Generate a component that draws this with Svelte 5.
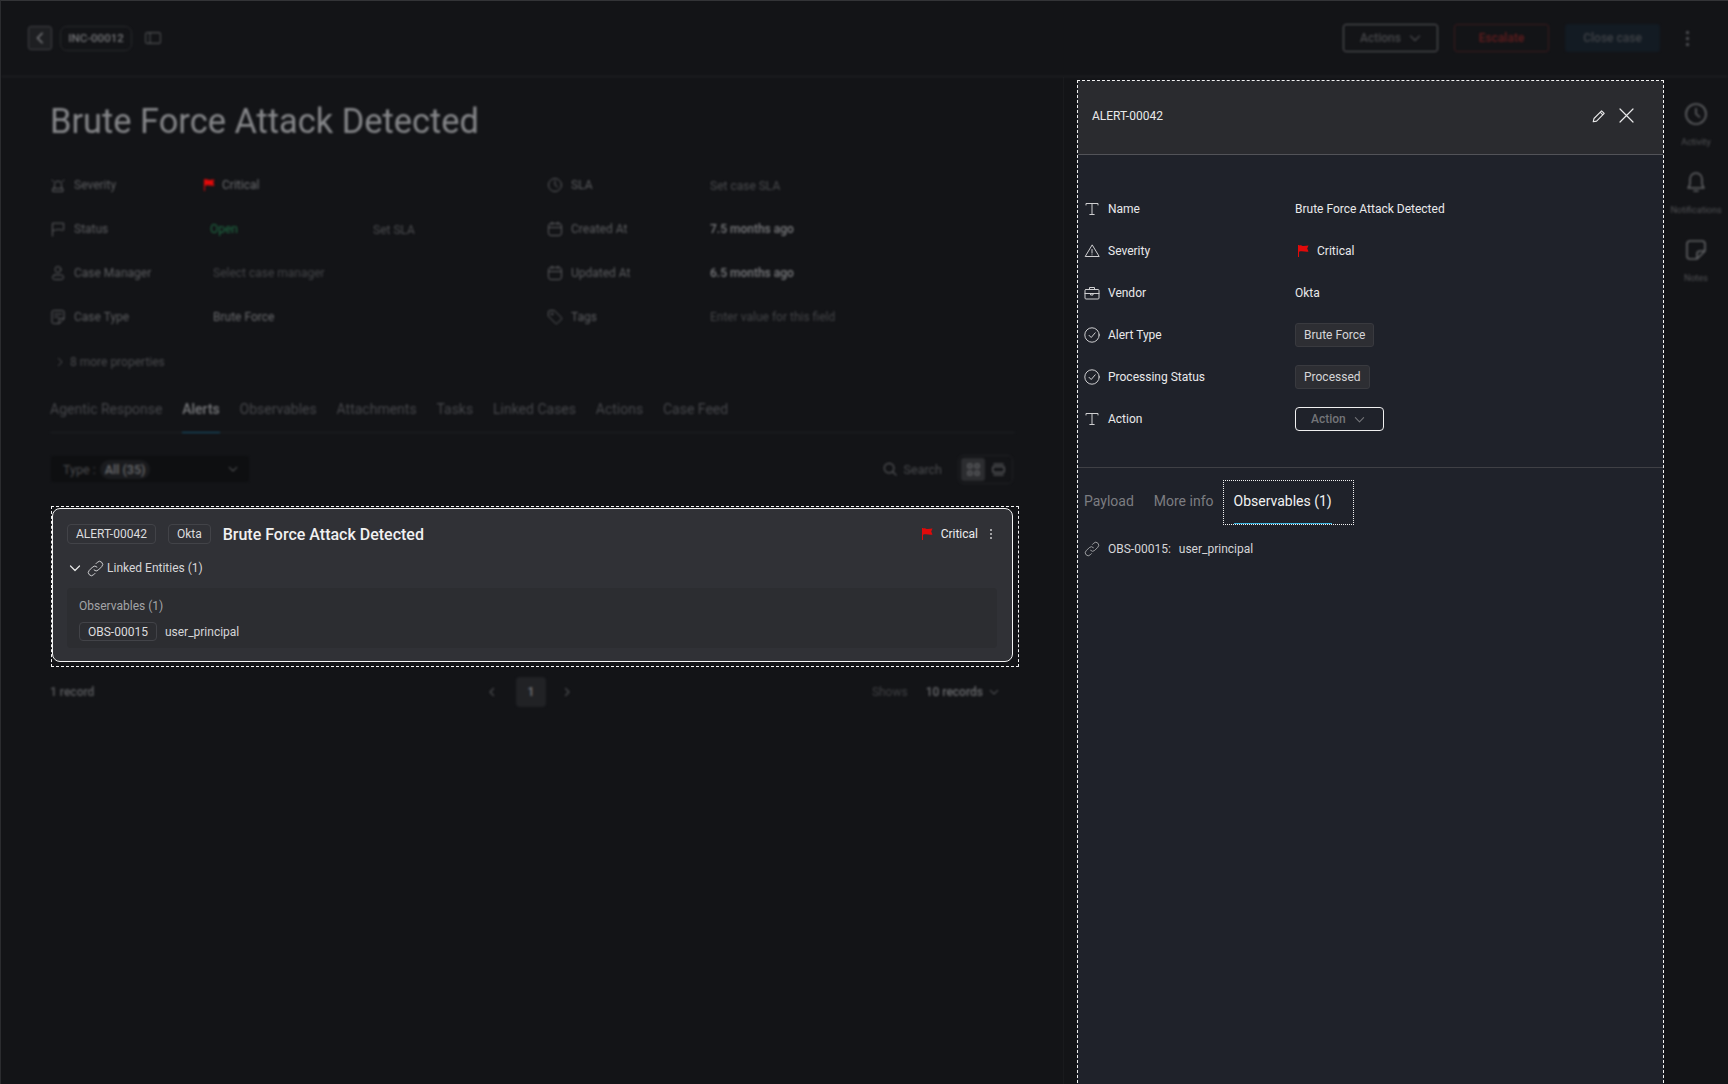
<script lang="ts">
  const leftProps = [
    { icon: 'siren', label: 'Severity' },
    { icon: 'flag', label: 'Status' },
    { icon: 'user', label: 'Case Manager' },
    { icon: 'note', label: 'Case Type' }
  ];
  const rightProps = [
    { icon: 'clock', label: 'SLA', value: 'Set case SLA', cls: 'faint nudge' },
    { icon: 'cal', label: 'Created At', value: '7.5 months ago', cls: 'strong' },
    { icon: 'cal', label: 'Updated At', value: '6.5 months ago', cls: 'strong' },
    { icon: 'tag', label: 'Tags', value: 'Enter value for this field', cls: 'fainter' }
  ];
  const tabs = ['Agentic Response', 'Alerts', 'Observables', 'Attachments', 'Tasks', 'Linked Cases', 'Actions', 'Case Feed'];
</script>

{#snippet glyph(name)}
  <svg class="ico" viewBox="0 0 16 16" fill="none" stroke="currentColor" stroke-width="1" stroke-linecap="round" stroke-linejoin="round">
    {#if name === 'siren'}
      <path d="M4.5 11V7.5a3.5 3.5 0 0 1 7 0V11M3 11.5h10v3H3zM2 3l1.5 1.5M14 3l-1.5 1.5" />
    {:else if name === 'flag'}
      <path d="M2.5 15V2.2h11.2v6.6c-2 1.2-3-.6-5.2-.4-2.2.2-3.8 1.2-6 1" />
    {:else if name === 'user'}
      <circle cx="8" cy="4.5" r="3" /><rect x="2.5" y="10" width="11" height="4.5" rx="2.2" />
    {:else if name === 'note'}
      <path d="M14 9.5V3a1.5 1.5 0 0 0-1.5-1.5h-9A1.5 1.5 0 0 0 2 3v10a1.5 1.5 0 0 0 1.5 1.5H9zM9 14.5v-5h5M4.5 5h7M4.5 8h4" />
    {:else if name === 'clock'}
      <circle cx="8" cy="8" r="6.5" /><path d="M8 4v4l2.5 2" />
    {:else if name === 'cal'}
      <rect x="1.5" y="2.5" width="13" height="12" rx="2.5" /><path d="M1.5 6.5h13M5 1v2.5M11 1v2.5" />
    {:else if name === 'tag'}
      <path d="M1.5 2.5a1 1 0 0 1 1-1h4.8l7.2 7.2a1 1 0 0 1 0 1.4l-4.4 4.4a1 1 0 0 1-1.4 0L1.5 7.3z" /><circle cx="5" cy="5" r=".8" />
    {:else if name === 'text'}
      <path d="M2 4V2.5h12V4M8 2.5v11M5.8 13.5h4.4" />
    {:else if name === 'warn'}
      <path d="M8 2.2 1.2 13.5h13.6zM8 6.5v3.6M8 11.8v.1" />
    {:else if name === 'case'}
      <rect x="1" y="4.5" width="14" height="9.5" rx="1" /><path d="M5.5 4.5V2.5h5v2M1 8.5h14M7 8.5h2v1.5H7z" />
    {:else if name === 'check'}
      <circle cx="8" cy="8" r="7.2" /><path d="m5 8.3 2.2 2.2L11.2 5.8" />
    {:else if name === 'link'}
      <path stroke-width=".9" d="M6.6 9.4a2.9 2.9 0 0 0 4.1 0l3.2-3.2a2.9 2.9 0 0 0-4.1-4.1L8.5 3.4M9.4 6.6a2.9 2.9 0 0 0-4.1 0l-3.2 3.2a2.9 2.9 0 0 0 4.1 4.1l1.3-1.3" />
    {/if}
  </svg>
{/snippet}

{#snippet redFlag()}
  <svg class="red-flag" viewBox="0 0 12 12"><path d="M1 0h1v12H1z" fill="#e10a0a" /><path d="M2 .6c2-.8 3 .5 4.6.5L11.5.6 10.2 3.5l1.3 3c-3 .8-5.6-.9-9.5.2z" fill="#e10a0a" /></svg>
{/snippet}

{#snippet chev(cls)}
  <svg class={cls} viewBox="0 0 12 12" fill="none" stroke="currentColor" stroke-width="1.2" stroke-linecap="round" stroke-linejoin="round"><path d="M1.5 4 6 8.5 10.5 4" /></svg>
{/snippet}

<div class="screen">
  <header class="topbar soft">
    <div class="top-left">
      <button class="back">
        <svg viewBox="0 0 12 16" fill="none" stroke="currentColor" stroke-width="1.6" stroke-linecap="round" stroke-linejoin="round"><path d="M8.5 2.5 3 8l5.5 5.5" /></svg>
      </button>
      <span class="case-id">INC-00012</span>
      <svg class="sidebar-ico" viewBox="0 0 16 12" fill="none" stroke="currentColor" stroke-width="1.1"><rect x=".6" y=".6" width="14.8" height="10.8" rx="1.5" /><path d="M5 .6v10.8" /></svg>
    </div>
    <div class="top-right">
      <button class="btn-actions">Actions {@render chev('chev-sm')}</button>
      <button class="btn-escalate">Escalate</button>
      <button class="btn-close">Close case</button>
      <span class="kebab"><i></i><i></i><i></i></span>
    </div>
  </header>

  <div class="workspace">
    <main class="main">
      <h1 class="soft">Brute Force Attack Detected</h1>

      <section class="props soft">
        <div class="prop-col">
          {#each leftProps as p, i}
            <div class="prop">
              <span class="prop-label">{@render glyph(p.icon)}{p.label}</span>
              {#if i === 0}
                <span class="prop-value sev">{@render redFlag()}Critical</span>
              {:else if i === 1}
                <span class="prop-value status"><span class="open">Open</span><span class="set-sla">Set SLA</span></span>
              {:else if i === 2}
                <span class="prop-value fainter">Select case manager</span>
              {:else}
                <span class="prop-value plain">Brute Force</span>
              {/if}
            </div>
          {/each}
        </div>
        <div class="prop-col">
          {#each rightProps as p}
            <div class="prop">
              <span class="prop-label">{@render glyph(p.icon)}{p.label}</span>
              <span class="prop-value {p.cls}">{p.value}</span>
            </div>
          {/each}
        </div>
      </section>

      <div class="more soft">
        <svg viewBox="0 0 12 12" fill="none" stroke="currentColor" stroke-width="1.2" stroke-linecap="round" stroke-linejoin="round"><path d="M4 1.5 8.5 6 4 10.5" /></svg>
        8 more properties
      </div>

      <nav class="tabs soft">
        {#each tabs as t}
          <span class="tab" class:active={t === 'Alerts'}>{t}</span>
        {/each}
      </nav>

      <div class="toolbar soft">
        <div class="type-select">
          <span>Type :</span><span class="type-all">All (35)</span>
          {@render chev('type-chev')}
        </div>
        <div class="tool-right">
          <svg class="search-ico" viewBox="0 0 16 16" fill="none" stroke="currentColor" stroke-width="1.3" stroke-linecap="round"><circle cx="7" cy="7" r="5.5" /><path d="m11 11 4 4" /></svg>
          <span class="search">Search</span>
          <div class="view-toggle">
            <span class="view on">
              <svg viewBox="0 0 14 14" fill="none" stroke="currentColor" stroke-width="1.7"><rect x="1" y="1" width="4.2" height="4.2" rx="1.2" /><rect x="8.8" y="1" width="4.2" height="4.2" rx="1.2" /><rect x="1" y="8.8" width="4.2" height="4.2" rx="1.2" /><rect x="8.8" y="8.8" width="4.2" height="4.2" rx="1.2" /></svg>
            </span>
            <span class="view">
              <svg viewBox="0 0 14 14" fill="none" stroke="currentColor" stroke-width="1.4" stroke-linecap="round"><rect x=".8" y="4" width="12.4" height="6" rx="1" /><path d="M2 1.2h10M2 12.8h10" /></svg>
            </span>
          </div>
        </div>
      </div>

      <div class="card-focus">
        <article class="card">
          <div class="card-head">
            <span class="chip">ALERT-00042</span>
            <span class="chip">Okta</span>
            <h2>Brute Force Attack Detected</h2>
            <span class="card-sev">{@render redFlag()}Critical</span>
            <span class="card-more"><i></i><i></i><i></i></span>
          </div>
          <div class="linked">
            {@render chev('linked-chev')}
            {@render glyph('link')}
            Linked Entities (1)
          </div>
          <div class="linked-box">
            <div class="linked-title">Observables (1)</div>
            <div class="linked-item"><span class="chip small">OBS-00015</span>user_principal</div>
          </div>
        </article>
      </div>

      <footer class="pager soft">
        <span class="records">1 record</span>
        <div class="pages">
          <svg viewBox="0 0 12 12" fill="none" stroke="currentColor" stroke-width="1.2" stroke-linecap="round" stroke-linejoin="round"><path d="M7.5 2.5 4 6l3.5 3.5" /></svg>
          <span class="page">1</span>
          <svg viewBox="0 0 12 12" fill="none" stroke="currentColor" stroke-width="1.2" stroke-linecap="round" stroke-linejoin="round"><path d="M4.5 2.5 8 6 4.5 9.5" /></svg>
        </div>
        <div class="page-size">
          <span class="shows">Shows</span>
          <span class="size">10 records</span>
          {@render chev('size-chev')}
        </div>
      </footer>
    </main>

    <aside class="panel">
      <div class="panel-head">
        <span>ALERT-00042</span>
        <div class="panel-actions">
          <svg class="pencil" viewBox="0 0 14 14" fill="none" stroke="currentColor" stroke-width="1.1" stroke-linejoin="round"><path d="M1.2 12.8 2 9.5 9.6 1.8l2.6 2.6-7.6 7.7zM8.2 3.2l2.6 2.6" /></svg>
          <svg class="close" viewBox="0 0 15 15" fill="none" stroke="currentColor" stroke-width="1.2" stroke-linecap="round"><path d="m1 1 13 13M14 1 1 14" /></svg>
        </div>
      </div>
      <div class="fields">
        <span class="field-label">{@render glyph('text')}Name</span><span class="field-value">Brute Force Attack Detected</span>
        <span class="field-label">{@render glyph('warn')}Severity</span><span class="field-value sev-row">{@render redFlag()}Critical</span>
        <span class="field-label">{@render glyph('case')}Vendor</span><span class="field-value">Okta</span>
        <span class="field-label">{@render glyph('check')}Alert Type</span><span class="field-value"><span class="tagchip">Brute Force</span></span>
        <span class="field-label">{@render glyph('check')}Processing Status</span><span class="field-value"><span class="tagchip">Processed</span></span>
        <span class="field-label">{@render glyph('text')}Action</span>
        <span class="field-value"><span class="action-btn">Action {@render chev('chev-sm')}</span></span>
      </div>
      <div class="panel-tabs">
        <span class="ptab">Payload</span>
        <span class="ptab">More info</span>
        <span class="ptab-focus"><span class="ptab-on">Observables (1)</span></span>
      </div>
      <div class="obs-row">{@render glyph('link')}<span>OBS-00015:</span><span>user_principal</span></div>
    </aside>

    <nav class="rail soft">
      <div class="rail-item">
        <svg viewBox="0 0 24 24" fill="none" stroke="currentColor" stroke-width="1.6" stroke-linecap="round" stroke-linejoin="round"><circle cx="12" cy="12" r="10" /><path d="M12 6.5V12l3.5 3" /></svg>
        <span>Activity</span>
      </div>
      <div class="rail-item">
        <svg viewBox="0 0 24 24" fill="none" stroke="currentColor" stroke-width="1.6" stroke-linecap="round" stroke-linejoin="round"><path d="M4 18c1.5-1.5 2-3 2-5V9a6 6 0 0 1 12 0v4c0 2 .5 3.5 2 5zM10 21h4" /></svg>
        <span>Notifications</span>
      </div>
      <div class="rail-item">
        <svg viewBox="0 0 24 24" fill="none" stroke="currentColor" stroke-width="1.6" stroke-linecap="round" stroke-linejoin="round"><path d="M21 13V6a3 3 0 0 0-3-3H6a3 3 0 0 0-3 3v12a3 3 0 0 0 3 3h7zM13 21v-5a3 3 0 0 1 3-3h5" /></svg>
        <span>Notes</span>
      </div>
    </nav>
  </div>
</div>

<style>
  :global(body) {
    background: #131417;
    font-family: Roboto, "Liberation Sans", sans-serif;
  }
  .screen {
    width: 1728px;
    height: 1084px;
    overflow: hidden;
    box-sizing: border-box;
    border-top: 1px solid #333437;
    border-left: 1px solid #2b2c2f;
    background: #131417;
    display: flex;
    flex-direction: column;
  }
  .soft {
    filter: blur(0.9px);
  }
  button {
    font: inherit;
    padding: 0;
    background: none;
  }
  .ico {
    width: 16px;
    height: 16px;
    flex: none;
  }

  /* top bar */
  .topbar {
    height: 76px;
    flex: none;
    box-sizing: border-box;
    border-bottom: 1px solid #242528;
    display: flex;
    align-items: center;
    justify-content: space-between;
    padding: 0 39px 1px 27px;
  }
  .top-left, .top-right {
    display: flex;
    align-items: center;
  }
  .back {
    width: 24px;
    height: 24px;
    box-sizing: border-box;
    border: 1px solid #414246;
    border-radius: 3px;
    background: #1e1f22;
    color: #7d7e81;
    display: flex;
    align-items: center;
    justify-content: center;
  }
  .back svg {
    width: 12px;
    height: 14px;
  }
  .case-id {
    margin-left: 8px;
    height: 25px;
    width: 72px;
    box-sizing: border-box;
    display: flex;
    align-items: center;
    justify-content: center;
    border: 1px solid #2a2b2e;
    border-radius: 7px;
    font-size: 11.5px;
    font-weight: 500;
    color: #747578;
  }
  .sidebar-ico {
    margin-left: 13px;
    width: 16px;
    height: 12px;
    color: #4e4f52;
  }
  .top-right button {
    width: 95px;
    height: 28px;
    box-sizing: border-box;
    border-radius: 3px;
    font-size: 12px;
    font-weight: 500;
  }
  .btn-actions {
    display: flex;
    align-items: center;
    justify-content: center;
    gap: 8px;
    border: 1.5px solid #5a5b5e;
    color: #47484b;
  }
  .btn-escalate {
    margin-left: 16px;
    border: 1px solid #3c1b1d;
    color: #641d1e;
  }
  .btn-close {
    margin-left: 16px;
    border: none;
    background: #131b23;
    color: #3f4247;
  }
  .chev-sm {
    width: 12px;
    height: 12px;
  }
  .kebab, .card-more {
    display: flex;
    flex-direction: column;
    align-items: center;
  }
  .kebab {
    margin-left: 26px;
    gap: 3px;
  }
  .kebab i {
    width: 3px;
    height: 3px;
    border-radius: 50%;
    background: #5c5d61;
  }

  .workspace {
    flex: 1;
    display: flex;
    min-height: 0;
  }

  /* case content */
  .main {
    width: 1063px;
    flex: none;
    box-sizing: border-box;
    border-right: 1px solid #191a1d;
    padding: 0 48px 0 49px;
  }
  h1 {
    margin: 22px 0 0;
    height: 44px;
    line-height: 44px;
    font-size: 34.4px;
    font-weight: 400;
    color: #86878a;
    white-space: nowrap;
  }
  .props {
    margin-top: 20px;
    display: grid;
    grid-template-columns: 497px 1fr;
  }
  .prop {
    height: 44px;
    display: grid;
    grid-template-columns: 162px 1fr;
    align-items: center;
    font-size: 12px;
  }
  .prop-label {
    display: flex;
    align-items: center;
    gap: 8px;
    color: #5c5d60;
  }
  .prop-value {
    display: flex;
    align-items: center;
    color: #66676a;
  }
  .sev {
    margin-left: -9px;
    gap: 7px;
    color: #6b6c6f;
  }
  .status {
    margin-left: -2px;
  }
  .open {
    width: 163px;
    color: #1f6c44;
  }
  .set-sla {
    color: #4c4d50;
    padding-top: 2px;
  }
  .fainter {
    color: #444548;
    margin-left: 1px;
  }
  .faint {
    color: #4a4b4e;
    margin-left: 1px;
  }
  .nudge {
    padding-top: 2px;
  }
  .strong {
    color: #7a7b7e;
    font-weight: 500;
    margin-left: 1px;
  }
  .plain {
    color: #6a6b6e;
    margin-left: 1px;
  }
  .more {
    margin: 11px 0 0 5px;
    height: 24px;
    display: flex;
    align-items: center;
    gap: 5px;
    font-size: 12px;
    color: #4a4b4e;
  }
  .more svg {
    width: 10px;
    height: 10px;
    color: #505154;
  }

  .tabs {
    margin-top: 11px;
    height: 48px;
    box-sizing: border-box;
    border-bottom: 1px solid #1f2023;
    display: flex;
    gap: 19.8px;
  }
  .tab {
    display: flex;
    align-items: center;
    font-size: 14px;
    color: #46474b;
  }
  .tab.active {
    color: #78797c;
    font-weight: 500;
    border-bottom: 1px solid #175a78;
    margin-bottom: -1px;
  }

  .toolbar {
    margin-top: 21px;
    height: 30px;
    display: flex;
    align-items: center;
    justify-content: space-between;
    font-size: 12.5px;
  }
  .type-select {
    margin-left: 1px;
    width: 198px;
    height: 26px;
    box-sizing: border-box;
    padding: 0 11px 0 12px;
    background: #0e0f11;
    border-radius: 3px;
    display: flex;
    align-items: center;
    gap: 4px;
    color: #4a4b4e;
  }
  .type-all {
    color: #6a6b6e;
    background: #1a1b1e;
    border-radius: 10px;
    padding: 2px 5px;
    font-weight: 500;
  }
  .type-chev {
    margin-left: auto;
    width: 10px;
    height: 10px;
    color: #6a6b6e;
  }
  .tool-right {
    display: flex;
    align-items: center;
    padding-right: 2px;
  }
  .search-ico {
    width: 14px;
    height: 14px;
    color: #5a5b5e;
  }
  .search {
    margin-left: 7px;
    color: #4a4b4e;
  }
  .view-toggle {
    margin-left: 16px;
    width: 55px;
    height: 29px;
    box-sizing: border-box;
    border: 1px solid #202124;
    border-radius: 5px;
    padding: 2px;
    display: flex;
    gap: 1px;
  }
  .view {
    width: 24px;
    height: 23px;
    border-radius: 3px;
    display: flex;
    align-items: center;
    justify-content: center;
    color: #5c5d60;
  }
  .view.on {
    background: #2c2d30;
  }
  .view svg {
    width: 13px;
    height: 13px;
  }

  /* highlighted alert card */
  .card-focus {
    margin: 22px -4px 0 1px;
    box-sizing: border-box;
    height: 161px;
    border: 1px dashed #f2f2f2;
    padding: 1px 5px 4px 0;
  }
  .card {
    height: 100%;
    box-sizing: border-box;
    background: #303136;
    border: 1px solid #f4f4f4;
    border-radius: 8px;
    padding: 13px 15px 0 14px;
  }
  .card-head {
    height: 24px;
    display: flex;
    align-items: center;
  }
  .chip {
    box-sizing: border-box;
    height: 20px;
    padding: 0 8px;
    border: 1px solid #424348;
    border-radius: 4px;
    display: inline-flex;
    align-items: center;
    font-size: 12px;
    color: #dcdcde;
    margin-right: 12px;
  }
  h2 {
    margin: 0;
    font-size: 16px;
    font-weight: 500;
    color: #f0f0f1;
    white-space: nowrap;
  }
  .card-sev {
    margin-left: auto;
    display: flex;
    align-items: center;
    gap: 8px;
    font-size: 12px;
    color: #ededee;
  }
  .red-flag {
    width: 12px;
    height: 12px;
    flex: none;
  }
  .card-more {
    margin: 0 5px 0 12px;
    gap: 2px;
  }
  .card-more i {
    width: 2px;
    height: 2px;
    border-radius: 50%;
    background: #c9c9cb;
  }
  .linked {
    margin-top: 11px;
    padding-left: 2px;
    height: 22px;
    display: flex;
    align-items: center;
    font-size: 12px;
    color: #d6d6d8;
  }
  .linked-chev {
    width: 12px;
    height: 12px;
    margin-right: 6px;
    color: #e8e8e8;
  }
  .linked .ico {
    width: 17px;
    height: 17px;
    margin-right: 3px;
  }
  .linked-box {
    margin-top: 9px;
    height: 60px;
    box-sizing: border-box;
    background: #2c2d31;
    border-radius: 4px;
    padding: 8px 12px;
  }
  .linked-title {
    height: 20px;
    display: flex;
    align-items: center;
    font-size: 12px;
    color: #a3a4a7;
  }
  .linked-item {
    margin-top: 6px;
    display: flex;
    align-items: center;
    font-size: 12px;
    color: #d6d6d8;
  }
  .chip.small {
    margin-right: 8px;
    height: 19px;
  }

  .pager {
    margin-top: 10px;
    height: 30px;
    display: grid;
    grid-template-columns: 436px 1fr auto;
    align-items: center;
    font-size: 12px;
    color: #5c5d60;
  }
  .records {
    font-weight: 500;
  }
  .pages {
    display: flex;
    align-items: center;
    color: #4c4d50;
  }
  .pages svg {
    width: 12px;
    height: 12px;
  }
  .page {
    margin: 0 15px 0 18px;
    width: 30px;
    height: 30px;
    border-radius: 4px;
    background: #212225;
    color: #78797c;
    font-weight: 500;
    display: flex;
    align-items: center;
    justify-content: center;
  }
  .page-size {
    display: flex;
    align-items: center;
    padding-right: 16px;
  }
  .shows {
    color: #404144;
    margin-right: 18px;
  }
  .size {
    color: #6a6b6e;
    font-weight: 500;
  }
  .size-chev {
    margin-left: 6px;
    width: 10px;
    height: 10px;
    color: #6a6b6e;
  }

  /* detail panel */
  .panel {
    margin: 3px 0 -4px 13px;
    width: 587px;
    flex: none;
    box-sizing: border-box;
    border: 1px dashed #f2f2f2;
    background: #1f222a;
    font-size: 12px;
    color: #e9e9ea;
  }
  .panel-head {
    height: 74px;
    box-sizing: border-box;
    background: #2a2b2f;
    border-bottom: 1px solid #525358;
    padding: 0 29px 4px 14px;
    display: flex;
    align-items: center;
    justify-content: space-between;
  }
  .panel-actions {
    display: flex;
    align-items: center;
    gap: 13px;
  }
  .pencil {
    width: 14px;
    height: 14px;
  }
  .close {
    width: 15px;
    height: 15px;
  }
  .fields {
    padding: 33px 0 27px 6px;
    border-bottom: 1px solid #3f4045;
    display: grid;
    grid-template-columns: 211px 1fr;
    grid-auto-rows: 42px;
    align-items: center;
  }
  .field-label {
    display: flex;
    align-items: center;
    gap: 8px;
  }
  .field-label .ico {
    color: #cfcfd1;
  }
  .field-value {
    display: flex;
    align-items: center;
  }
  .sev-row {
    gap: 8px;
    padding-left: 2px;
  }
  .tagchip {
    height: 24px;
    box-sizing: border-box;
    padding: 0 8px;
    display: inline-flex;
    align-items: center;
    background: #2d2e33;
    border: 1px solid #393a3f;
    border-radius: 3px;
    color: #d6d6d8;
  }
  .action-btn {
    width: 89px;
    height: 24px;
    box-sizing: border-box;
    border: 1px solid #f0f0f0;
    border-radius: 4px;
    display: inline-flex;
    align-items: center;
    gap: 8px;
    padding-left: 15px;
    color: #737478;
    font-weight: 500;
  }
  .action-btn .chev-sm {
    width: 11px;
    height: 11px;
  }
  .panel-tabs {
    margin-top: 12px;
    height: 45px;
    padding-left: 6px;
    display: flex;
    align-items: stretch;
    font-size: 14px;
  }
  .ptab {
    display: flex;
    align-items: center;
    padding-bottom: 3px;
    margin-right: 20px;
    color: #7c7d81;
  }
  .ptab + .ptab {
    margin-right: 9px;
  }
  .ptab-focus {
    box-sizing: border-box;
    border: 1px dotted #f2f2f2;
    padding: 0 21px 0 10px;
    display: flex;
  }
  .ptab-on {
    box-sizing: border-box;
    height: 43px;
    border-bottom: 1px solid #3ab4e0;
    padding-bottom: 3px;
    display: flex;
    align-items: center;
    color: #f2f2f3;
  }
  .obs-row {
    margin-top: 16px;
    padding-left: 6px;
    display: flex;
    align-items: center;
    font-size: 12px;
    color: #d6d6d8;
  }
  .obs-row .ico {
    margin-right: 8px;
    color: #a8a9ac;
  }
  .obs-row span + span {
    margin-left: 8px;
  }

  /* right rail */
  .rail {
    flex: 1;
    display: flex;
    flex-direction: column;
    align-items: center;
    padding-top: 25px;
  }
  .rail-item {
    height: 68px;
    display: flex;
    flex-direction: column;
    align-items: center;
    color: #626366;
  }
  .rail-item svg {
    width: 24px;
    height: 24px;
  }
  .rail-item span {
    margin-top: 11px;
    font-size: 9px;
    color: #525356;
  }
</style>
